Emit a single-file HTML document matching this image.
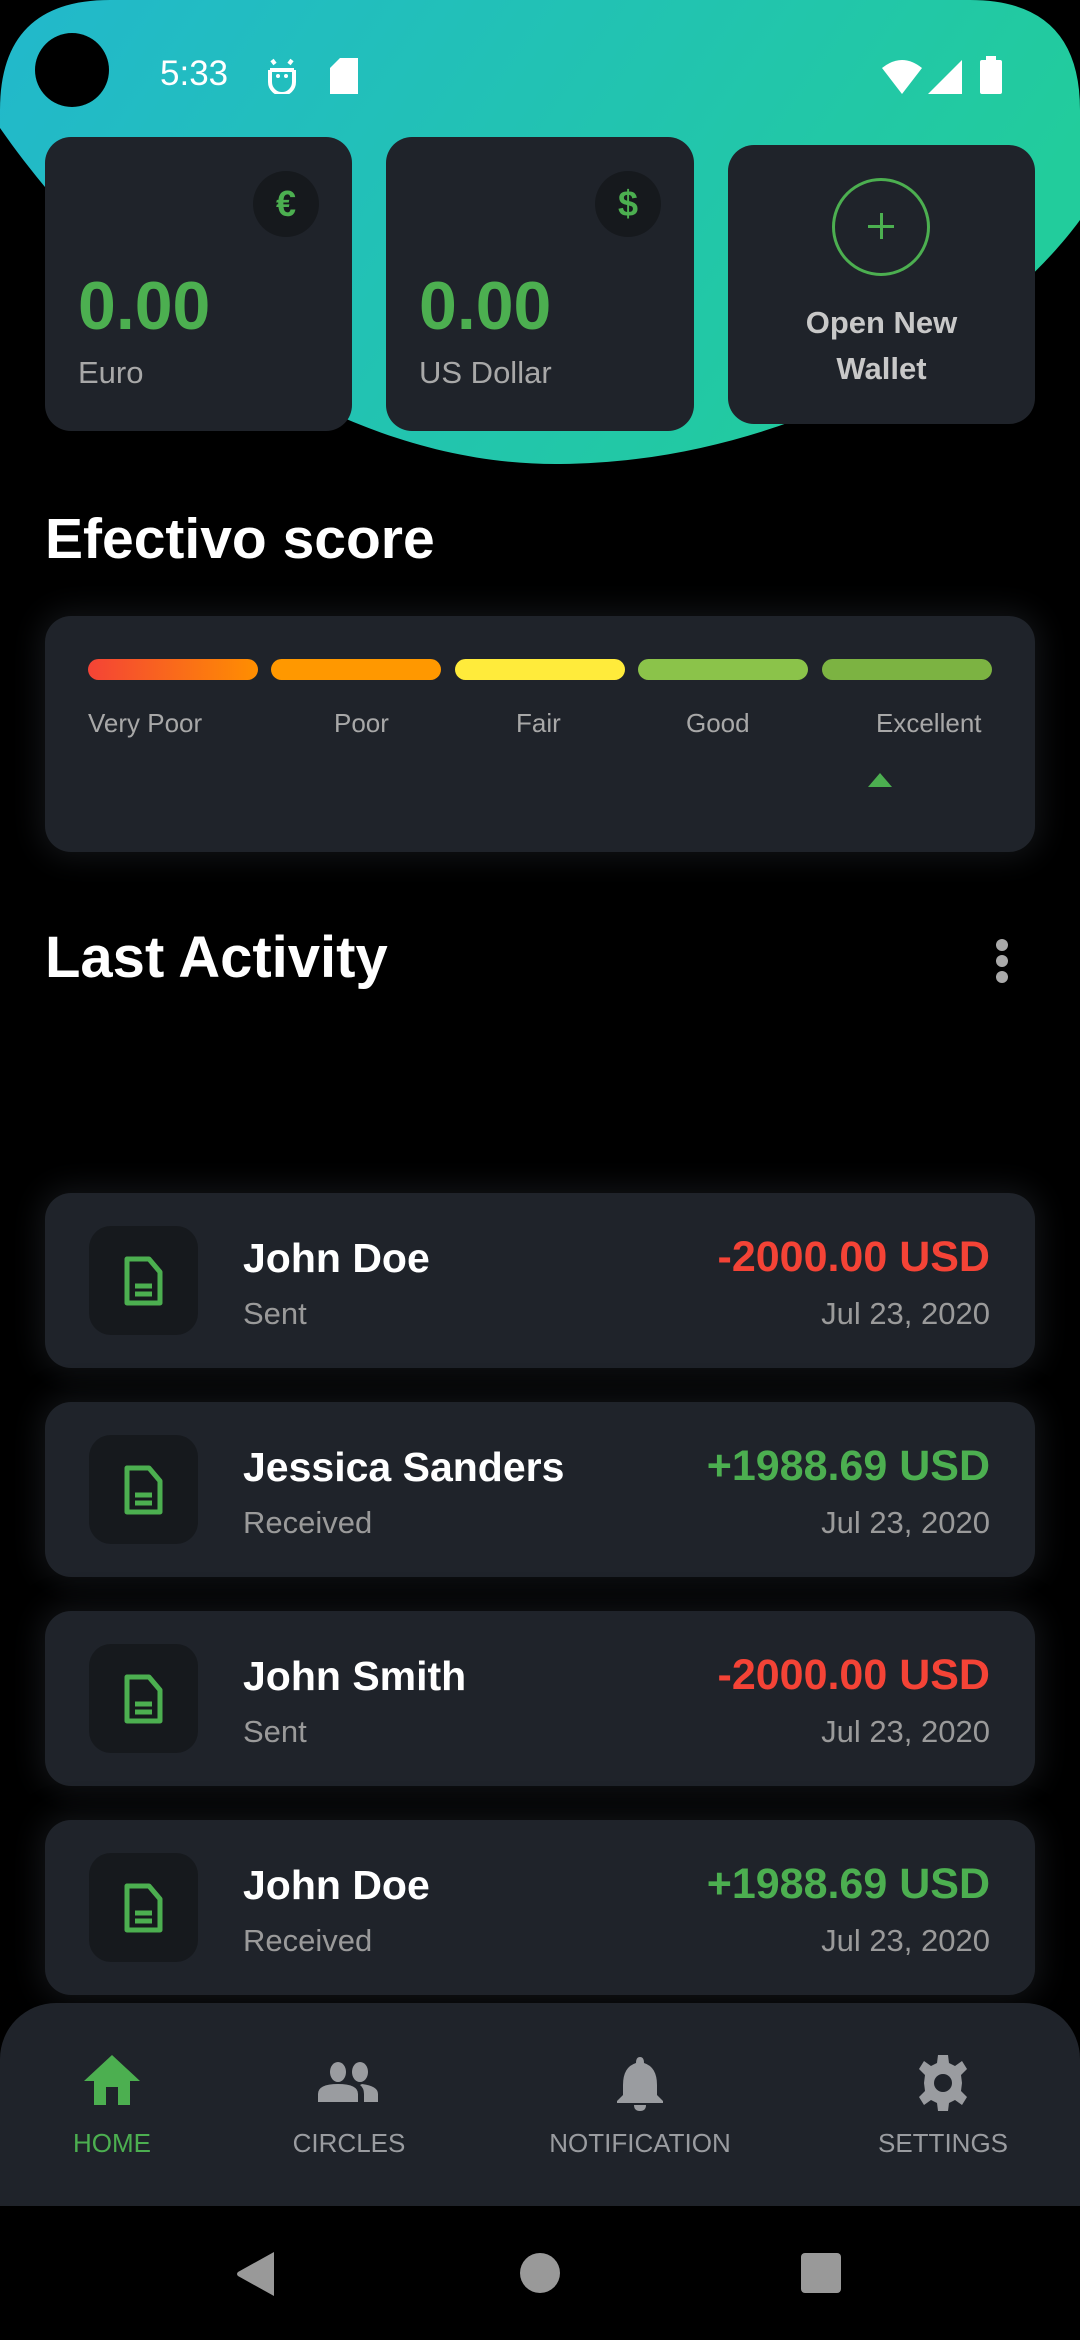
<!DOCTYPE html>
<html><head><meta charset="utf-8">
<style>
*{margin:0;padding:0;box-sizing:border-box}
body{width:1080px;height:2340px;background:#000;font-family:"Liberation Sans",sans-serif;position:relative;overflow:hidden;color:#fff}
.abs{position:absolute}
.card{position:absolute;background:#1f232a;border-radius:26px}
.glow{box-shadow:0 0 30px 6px rgba(40,44,52,0.45)}
.t{position:absolute;white-space:nowrap}
.ic{position:absolute;left:44px;top:33px;width:109px;height:109px;background:#16191d;border-radius:22px}
.name{left:198px;top:42px;font-size:41px;font-weight:bold}
.sub{left:198px;top:103px;font-size:31px;color:#9a9a9a}
.amt{right:45px;top:40px;font-size:43px;font-weight:bold}
.date{right:45px;top:103px;font-size:31px;color:#9a9a9a}
.red{color:#f44336}.grn{color:#4caf50}
.lbl{position:absolute;top:2128px;font-size:26px;color:#9a9ca0;transform:translateX(-50%)}
</style></head><body>
<svg class="abs" style="left:0;top:0" width="1080" height="470">
<defs><linearGradient id="g" x1="0" y1="0" x2="1" y2="0.3"><stop offset="0" stop-color="#22b8cc"/><stop offset="1" stop-color="#22cc9c"/></linearGradient></defs>
<path d="M0 110 Q0 0 110 0 L970 0 Q1080 0 1080 110 L1080 220 C1000 330 800 462 560 464 C330 466 120 300 0 128 Z" fill="url(#g)"/>
</svg>
<div class="abs" style="left:35px;top:33px;width:74px;height:74px;border-radius:50%;background:#000"></div>
<div class="t" style="left:160px;top:54px;font-size:35px">5:33</div>
<svg class="abs" style="left:266px;top:56px" width="32" height="38" viewBox="0 0 32 38"><path d="M6 4l3 4M26 4l-3 4M4 14h24M4 14v12a12 12 0 0 0 24 0V14" fill="none" stroke="#fff" stroke-width="4"/><circle cx="12" cy="20" r="2" fill="#fff"/><circle cx="20" cy="20" r="2" fill="#fff"/></svg>
<svg class="abs" style="left:330px;top:58px" width="28" height="36"><path d="M10 0H28V36H0V10Z" fill="#fff"/></svg>
<svg class="abs" style="left:882px;top:60px" width="40" height="34"><path d="M0 8Q20-8 40 8L20 34Z" fill="#fff"/></svg>
<svg class="abs" style="left:928px;top:60px" width="34" height="34"><path d="M34 0V34H0Z" fill="#fff"/></svg>
<svg class="abs" style="left:980px;top:56px" width="22" height="38"><rect x="6" y="0" width="10" height="5" fill="#fff"/><rect x="0" y="4" width="22" height="34" rx="2" fill="#fff"/></svg>

<div class="card" style="left:45px;top:137px;width:307px;height:294px">
<div class="abs" style="left:208px;top:34px;width:66px;height:66px;border-radius:50%;background:#16191d;color:#4caf50;font-size:36px;font-weight:bold;text-align:center;line-height:66px">€</div>
<div class="t grn" style="left:33px;top:130px;font-size:68px;font-weight:bold">0.00</div>
<div class="t" style="left:33px;top:218px;font-size:31px;color:#a8a8a8">Euro</div>
</div>
<div class="card" style="left:386px;top:137px;width:308px;height:294px">
<div class="abs" style="left:209px;top:34px;width:66px;height:66px;border-radius:50%;background:#16191d;color:#4caf50;font-size:36px;font-weight:bold;text-align:center;line-height:66px">$</div>
<div class="t grn" style="left:33px;top:130px;font-size:68px;font-weight:bold">0.00</div>
<div class="t" style="left:33px;top:218px;font-size:31px;color:#a8a8a8">US Dollar</div>
</div>
<div class="card" style="left:728px;top:145px;width:307px;height:279px">
<div class="abs" style="left:104px;top:33px;width:98px;height:98px;border-radius:50%;border:3px solid #4caf50"></div>
<div class="abs" style="left:140px;top:80px;width:26px;height:3px;background:#4caf50"></div>
<div class="abs" style="left:152px;top:68px;width:3px;height:26px;background:#4caf50"></div>
<div class="abs" style="left:0;top:155px;width:307px;text-align:center;font-size:31px;font-weight:bold;color:#c8c8c8;line-height:46px">Open New<br>Wallet</div>
</div>

<div class="t" style="left:45px;top:506px;font-size:57px;font-weight:bold">Efectivo score</div>
<div class="card glow" style="left:45px;top:616px;width:990px;height:236px">
<div class="abs" style="left:43px;top:43px;width:170px;height:21px;border-radius:11px;background:linear-gradient(90deg,#f44336,#ff8f00)"></div>
<div class="abs" style="left:226px;top:43px;width:170px;height:21px;border-radius:11px;background:#ff9800"></div>
<div class="abs" style="left:410px;top:43px;width:170px;height:21px;border-radius:11px;background:#ffeb3b"></div>
<div class="abs" style="left:593px;top:43px;width:170px;height:21px;border-radius:11px;background:#8bc34a"></div>
<div class="abs" style="left:777px;top:43px;width:170px;height:21px;border-radius:11px;background:#7cb342"></div>
<div class="t" style="left:43px;top:92px;font-size:26px;color:#a8a8a8">Very Poor</div>
<div class="t" style="left:289px;top:92px;font-size:26px;color:#a8a8a8">Poor</div>
<div class="t" style="left:471px;top:92px;font-size:26px;color:#a8a8a8">Fair</div>
<div class="t" style="left:641px;top:92px;font-size:26px;color:#a8a8a8">Good</div>
<div class="t" style="left:831px;top:92px;font-size:26px;color:#a8a8a8">Excellent</div>
<svg class="abs" style="left:823px;top:157px" width="24" height="14"><path d="M0 14L12 0L24 14Z" fill="#4caf50"/></svg>
</div>

<div class="t" style="left:45px;top:924px;font-size:58px;font-weight:bold">Last Activity</div>
<div class="abs" style="left:996px;top:939px;width:12px;height:12px;border-radius:50%;background:#aaa"></div>
<div class="abs" style="left:996px;top:955px;width:12px;height:12px;border-radius:50%;background:#aaa"></div>
<div class="abs" style="left:996px;top:971px;width:12px;height:12px;border-radius:50%;background:#aaa"></div>

<div class="card glow" style="left:45px;top:1193px;width:990px;height:175px">
<div class="ic"><svg class="abs" style="left:34px;top:30px" width="40" height="50" viewBox="0 0 40 50"><path d="M4 3H26L37 16V47H4Z" fill="none" stroke="#4caf50" stroke-width="5" stroke-linejoin="round"/><path d="M12 30H29M12 38H29" stroke="#4caf50" stroke-width="5"/></svg></div>
<div class="t name">John Doe</div><div class="t sub">Sent</div>
<div class="t amt red">-2000.00 USD</div><div class="t date">Jul 23, 2020</div>
</div>
<div class="card glow" style="left:45px;top:1402px;width:990px;height:175px">
<div class="ic"><svg class="abs" style="left:34px;top:30px" width="40" height="50" viewBox="0 0 40 50"><path d="M4 3H26L37 16V47H4Z" fill="none" stroke="#4caf50" stroke-width="5" stroke-linejoin="round"/><path d="M12 30H29M12 38H29" stroke="#4caf50" stroke-width="5"/></svg></div>
<div class="t name">Jessica Sanders</div><div class="t sub">Received</div>
<div class="t amt grn">+1988.69 USD</div><div class="t date">Jul 23, 2020</div>
</div>
<div class="card glow" style="left:45px;top:1611px;width:990px;height:175px">
<div class="ic"><svg class="abs" style="left:34px;top:30px" width="40" height="50" viewBox="0 0 40 50"><path d="M4 3H26L37 16V47H4Z" fill="none" stroke="#4caf50" stroke-width="5" stroke-linejoin="round"/><path d="M12 30H29M12 38H29" stroke="#4caf50" stroke-width="5"/></svg></div>
<div class="t name">John Smith</div><div class="t sub">Sent</div>
<div class="t amt red">-2000.00 USD</div><div class="t date">Jul 23, 2020</div>
</div>
<div class="card glow" style="left:45px;top:1820px;width:990px;height:175px">
<div class="ic"><svg class="abs" style="left:34px;top:30px" width="40" height="50" viewBox="0 0 40 50"><path d="M4 3H26L37 16V47H4Z" fill="none" stroke="#4caf50" stroke-width="5" stroke-linejoin="round"/><path d="M12 30H29M12 38H29" stroke="#4caf50" stroke-width="5"/></svg></div>
<div class="t name">John Doe</div><div class="t sub">Received</div>
<div class="t amt grn">+1988.69 USD</div><div class="t date">Jul 23, 2020</div>
</div>

<div class="abs" style="left:0;top:2003px;width:1080px;height:203px;background:#1f232a;border-radius:56px 56px 0 0"></div>
<svg class="abs" style="left:84px;top:2055px" width="56" height="50" viewBox="0 0 56 50"><path d="M28 0L56 26H46V50H34V32H22V50H10V26H0Z" fill="#4caf50"/></svg>
<svg class="abs" style="left:318px;top:2062px" width="62" height="40" viewBox="0 0 62 40"><ellipse cx="20" cy="10" rx="8" ry="10" fill="#9a9ca0"/><ellipse cx="42" cy="10" rx="8" ry="10" fill="#9a9ca0"/><path d="M0 40V32Q0 22 20 22Q40 22 40 32V40Z" fill="#9a9ca0"/><path d="M44 22Q60 24 60 32V40H46V32Q46 26 42 23Z" fill="#9a9ca0"/></svg>
<svg class="abs" style="left:617px;top:2055px" width="46" height="56" viewBox="0 0 46 56"><path d="M23 2Q27 2 27 8Q40 12 40 30V40L46 46V48H0V46L6 40V30Q6 12 19 8Q19 2 23 2Z" fill="#9a9ca0"/><path d="M17 50H29Q29 56 23 56Q17 56 17 50Z" fill="#9a9ca0"/></svg>
<svg class="abs" style="left:915px;top:2055px" width="56" height="56" viewBox="0 0 56 56"><path d="M23 0H33L34 8L40 11L47 6L52 14L46 20L47 28L46 36L52 42L47 50L40 45L34 48L33 56H23L22 48L16 45L9 50L4 42L10 36L9 28L10 20L4 14L9 6L16 11L22 8Z" fill="#9a9ca0"/><circle cx="28" cy="28" r="9" fill="#1f232a"/></svg>
<div class="lbl" style="left:112px;color:#4caf50">HOME</div>
<div class="lbl" style="left:349px">CIRCLES</div>
<div class="lbl" style="left:640px">NOTIFICATION</div>
<div class="lbl" style="left:943px">SETTINGS</div>

<svg class="abs" style="left:236px;top:2252px" width="40" height="44"><path d="M38 0V44L2 24Q0 22 2 20Z" fill="#999"/></svg>
<div class="abs" style="left:520px;top:2253px;width:40px;height:40px;border-radius:50%;background:#999"></div>
<div class="abs" style="left:801px;top:2253px;width:40px;height:40px;border-radius:4px;background:#999"></div>
</body></html>
